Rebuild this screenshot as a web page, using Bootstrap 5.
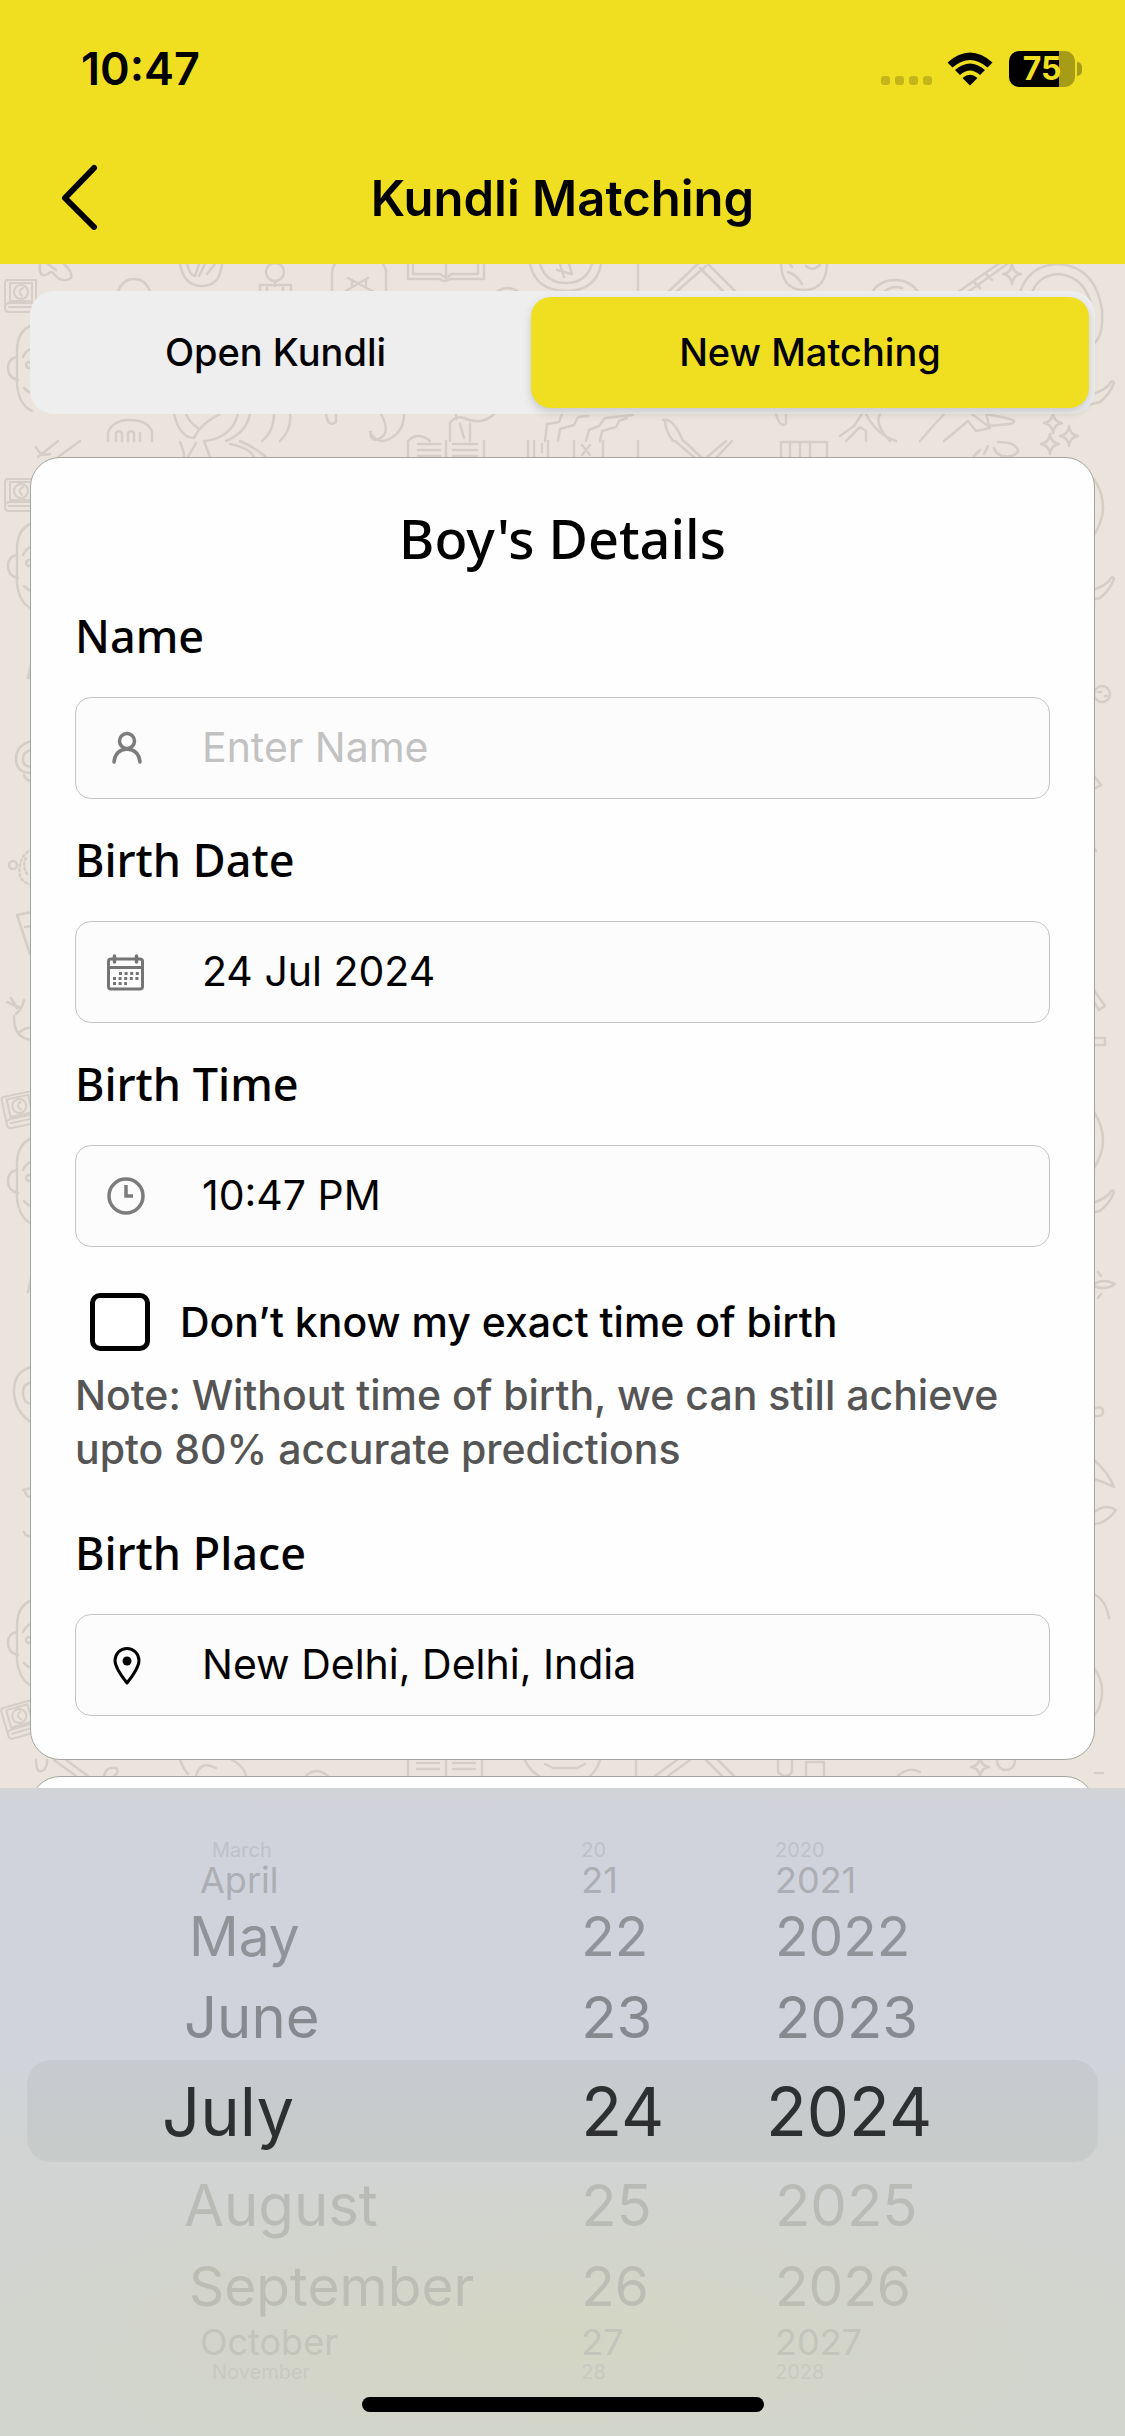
<!DOCTYPE html>
<html lang="en">
<head>
<meta charset="utf-8">
<meta name="viewport" content="width=device-width, initial-scale=1">
<title>Kundli Matching</title>
<link href="https://cdn.jsdelivr.net/npm/bootstrap@5.3.0/dist/css/bootstrap.min.css" rel="stylesheet">
<style>
  :root { --brand: #f0df20; }
  body { font-family: Inter, "Liberation Sans", sans-serif; color: #000; background: #eae4dc; }
  .app-head { background: var(--brand); height: 264px; }
  .status-bar { height: 138px; padding: 0 43px 0 81px; }
  .clock-text { font-size: 45px; font-weight: 600; line-height: 52px; }
  .signal-dots { gap: 5px; padding-top: 22px; margin-right: 15px; }
  .signal-dots span { width: 9px; height: 9px; border-radius: 3px; background: #c4b61a; }
  .battery-body { width: 66px; height: 36px; border-radius: 10px; color: var(--brand); font-size: 32px; font-weight: 700; line-height: 36px; background: linear-gradient(90deg, #000 76%, #a79c16 76%); }
  .battery-tip { width: 5px; height: 14px; border-radius: 0 7px 7px 0; background: #a79c16; margin-left: 2px; }
  .title-bar { height: 120px; padding: 0 60px; }
  .title-bar h1 { font-size: 49px; font-weight: 600; line-height: 66px; }
  .side-slot { width: 40px; height: 68px; }

  .doodles { position: absolute; inset: 0; width: 100%; height: 100%; z-index: 0; }
  .content-area { min-height: 0; padding: 27px 30px 0; }
  .content-area > :not(.doodles) { position: relative; z-index: 1; }
  .tab-track { background: #eeeeee; border-radius: 24px; height: 123px; padding: 6px; gap: 16px; margin-bottom: 43px; }
  .tab-track .btn { flex: 1 1 0; border: 0; border-radius: 20px; font-size: 38px; font-weight: 500; color: #000; }
  .tab-track .btn.active { flex: 0 0 53%; background: var(--brand); color: #000; box-shadow: 0 4px 10px rgba(0, 0, 0, .16); }

  .sheet-card { background: #fefefe; border: 1px solid #a4a4a0; border-radius: 30px; padding: 43px 44px; }
  .sheet-card h2 { font-family: "Noto Sans", sans-serif; font-size: 54px; font-weight: 500; line-height: 74px; margin-bottom: 31px; }
  .group-label { font-family: "Noto Sans", sans-serif; font-size: 45px; font-weight: 500; line-height: 60px; margin-bottom: 31px; display: block; }
  .form-block { margin-bottom: 31px; }
  .entry { height: 102px; border: 1px solid #c4c4c4; border-radius: 16px; background: #fcfcfc; padding: 0 30px; gap: 56px; }
  .entry svg { width: 40px; height: 40px; flex: none; }
  .entry input { font-size: 41px; border: 0; background: transparent; color: #000; padding: 0; outline: 0; min-width: 0; }
  .entry input::placeholder { color: #c2c2c2; opacity: 1; }
  .tick-row { padding: 15px 15px 0; gap: 30px; }
  .tick-row .form-check-input[type=checkbox] { width: 60px; height: 58px; margin: 0; border: 5px solid #000; border-radius: 10px; background-color: #fff; }
  .tick-row label { font-size: 41px; font-weight: 500; line-height: 58px; }
  .note-text { font-size: 41px; font-weight: 500; line-height: 54px; color: #555; margin: 17px 0 47px; }

  .picker-sheet { position: relative; padding: 50px 27px 24px; background: radial-gradient(ellipse 55% 24% at 50% 84%, rgba(213, 214, 190, .65), rgba(213, 214, 190, 0)), linear-gradient(#d1d3d7 0, #d0d3dc 8%, #d1d3dc 38%, #d1d4d3 54%, #d2d5cd 100%); }
  .band-back { position: absolute; left: 27px; right: 27px; top: 272px; height: 102px; border-radius: 24px; background: rgba(20, 30, 40, .05); }
  .picker-wheel { position: relative; display: flex; }
  .picker-wheel ul { margin: 0; padding: 0; list-style: none; }
  .picker-wheel li { display: flex; align-items: center; white-space: nowrap; line-height: 1; }
  .picker-wheel .month-col { width: 51%; padding-left: 135px; }
  .picker-wheel .day-col { width: 18%; padding-left: 8px; }
  .year-col { width: 31%; }
  .far-3 { height: 24px; font-size: 20px; color: #bfc1c7; padding-left: 50px; }
  .far-2 { height: 36px; font-size: 36px; color: #acaeb3; padding-left: 38px; }
  .far-1 { height: 76px; font-size: 55px; color: #909398; padding-left: 27px; }
  .near { height: 86px; font-size: 58px; color: #86898e; padding-left: 22px; }
  .chosen { height: 102px; font-size: 67px; color: #2d2f30; }
  .day-col li { padding-left: 0; }
  .year-col li:not(.chosen) { padding-left: 9px; }
  .below.near { color: #b9bbb7; }
  .below.far-1 { color: #bcbeb4; }
  .below.far-2 { color: #c3c5ba; }
  .below.far-3 { color: #c8cac0; }
  .home-bar { width: 402px; height: 15px; border-radius: 8px; background: #000; margin: 13px auto 0; }
</style>
</head>
<body>
<div class="vh-100 d-flex flex-column overflow-hidden">

  <header class="app-head flex-shrink-0">
    <div class="status-bar d-flex align-items-center justify-content-between">
      <span class="clock-text">10:47</span>
      <div class="d-flex align-items-center">
        <div class="signal-dots d-flex"><span></span><span></span><span></span><span></span></div>
        <svg width="46" height="34" viewBox="0 0 46 34" class="me-3" aria-hidden="true">
          <path d="M0.500 10.500 Q23 -9.500 45.500 10.500 L40.500 15.500 Q23 0.500 5.500 15.500Z"/>
          <path d="M8 18 Q23 5 38 18 L33 23 Q23 14 13 23Z"/>
          <path d="M15.500 26 Q23 19.500 30.500 26 L23 33.500Z"/>
        </svg>
        <div class="battery-body text-center">75</div>
        <div class="battery-tip"></div>
      </div>
    </div>
    <div class="title-bar d-flex align-items-start justify-content-between">
      <a href="#" class="side-slot mt-4" aria-label="Back">
        <svg width="40" height="68" viewBox="0 0 40 68"><path d="M34 6 5 36 34 65" fill="none" stroke="#000" stroke-width="6" stroke-linecap="round" stroke-linejoin="round"/></svg>
      </a>
      <h1 class="mb-0 mt-4 pt-1">Kundli Matching</h1>
      <span class="side-slot"></span>
    </div>
  </header>

  <main class="content-area flex-grow-1 position-relative overflow-hidden">
    <svg class="doodles" viewBox="0 0 1125 1524" preserveAspectRatio="xMidYMin slice" fill="none" stroke="#d5cec6" stroke-width="2.500" stroke-linecap="round" stroke-linejoin="round" aria-hidden="true">
      <defs>
        <g id="charm-book" stroke-width="2"><path d="M6 2h30v32H9q-4 0-4-4V5q0-3 3-3M5 28q1-3 5-3h26M10 5h22v18H10zM9 29h24"/><circle cx="21" cy="14" r="7"/><path d="M23 10q-6 3-1 8"/></g>
        <g id="child-face"><path d="M32 0Q17 6 17 26v34q2 20 15 26M17 32q-9 1-9 11t10 12M23 32q4-8 9-8M32 68q-5-1-8-5"/><circle cx="29" cy="40" r="3"/></g>
        <g id="twinkle"><path d="M0-10Q1-1 9 0 1 1 0 10-1 1-9 0-1-1 0-10Z"/></g>
        <g id="horn"><path d="M0 0h10M0 12h9M-10 27 18 20Q28 12 32 1 30-3 27 3 18 12 0 14"/></g>
      </defs>
      <!-- strip above the tabs -->
      <path d="M40 0q-2 15 8 10 4-4 6 0 8 10 17 4 2-6-7-14M48 0l8 6"/>
      <path d="M180 0q4 22 22 22T222 0M187 0q3 12 8 12l4-12M199 12l6-12M207 10l8-10"/>
      <circle cx="275" cy="8" r="9"/><path d="M275-6v5M275 17v5M260 28v-7h31v7M267 28v-4M283 28v-4M118 28q4-13 16-13t16 13"/>
      <path d="M332 28V8q2-12 12-14M386 28V6q-3-8-8-10M344 28l24-14M348 14l26 14M352 16v6M366 16v6"/>
      <path d="M408 0v15h32q4 4 10 0h34V0M413 0v10h27l6 4 6-4h26V0M446 0v12"/>
      <path d="M530 0q6 27 36 27t35-27M540 0q6 19 26 19T592 0M557 6l14 4M560 0l4 13M569 0l3 10M497 28q10-8 22 0"/>
      <path d="M638-4v32M668 28l34-32M676 28l30-26M700 4l24 24M708 0l28 28"/>
      <path d="M781 0q1 26 23 26T827 0M788 8q8 2 14 12M790 0l2 3M806 2q6 6 14-1"/>
      <path d="M872 28q8-12 23-12t23 12M884 28q8-7 18-4M958 28l46-32M968 28l42-30M974 18l6 6M986 10l6 6"/>
      <use href="#twinkle" x="1012" y="10"/>
      <path d="M1020 28Q1030 0 1060 0q36 4 42 46 2 30-12 36M1032 28q8-18 28-18 26 4 32 34"/>
      <!-- strip between tabs and card -->
      <path d="M108 177v-8q4-13 22-13t22 12v9M116 177v-8q3-4 6 0v8M128 177v-8q3-4 6 0v8M140 177v-8"/>
      <path d="M174 150q6 24 20 24 6-14 26-24M186 150q3 8 12 14M206 177q26-4 32-27M226 177q20-8 24-27M262 177q12-10 12-27M280 177q12-12 10-27"/>
      <path d="M326 150q2 14 10 8v-8M381 150q12 22-6 26-6-2-4-8M370 168q4 9 14 9 20-6 20-27M408 177q10-10 22 0"/>
      <path d="M450 177v-18q6-8 14-5 18 8 30-4M456 150v5M470 160v17M460 160l4 14"/>
      <path d="M545 177l2-17 12-2 3-8M558 177l2-12 14-4 4-8 10-1M586 177l3-11 10-4 6-8 28-3M600 177l2-10 14-4 3-6 8-3"/>
      <path d="M663 156q10-3 20 21M665 156q0 10 8 21M776 150q4 14 10 10v-10M840 172l14-10 8-12M846 177l14-14 6 4v10M866 150q10 20 30 27M880 150q-6 10 10 27"/>
      <path d="M920 177q12-14 24-27M944 177l24-20 8 10 14-3-4-14M972 150l16 12 22-2q10-3-4-6l-20-4"/>
      <use href="#twinkle" x="1053" y="159"/><use href="#twinkle" x="1069" y="172"/><use href="#twinkle" x="1050" y="180"/>
      <path d="M38 193l20-16M36 183q4 10 14 7M58 193l22-16M180 178q4 9 4 15M196 179l-8 14M204 177l6 16M230 180q20 4 24 13M240 177q14 6 26 16"/>
      <path d="M408 177v17M484 177v17M446 177v17M418 180h22M418 186h22M418 192h22M453 180h24M453 186h24M453 192h24"/>
      <path d="M528 177v17M534 177v17M548 177v17M542 180v8M574 177v17M582 181l8 10M590 181l-8 10M603 177v17M638 177v17M675 177l20 17M684 177l18 17M706 194l20-17M716 194l16-17M781 194v-16h46v16M790 180v14M800 180v14M810 180v14"/>
      <path d="M974 192l6-6M984 190l4-8M998 178q20 0 20 10-6 6-14 4M994 184q2 6 8 8"/>
      <!-- left edge -->
      <use href="#charm-book" y="14"/><use href="#child-face" y="61"/>
      <use href="#charm-book" y="213"/><use href="#child-face" y="259"/>
      <path d="M28 414l4-18M28 414h4"/>
      <path d="M32 477q-16 4-16 18t16 14M32 486q-9 1-9 9t9 8M24 511q2 6 8 6"/>
      <circle cx="13" cy="601" r="4"/><path d="M32 585q-15 8-12 28 4 6 12 8M26 594q-4 8 1 16" stroke-dasharray="2 3"/>
      <path d="M32 648l-15 3 13 39M32 662l-7 1M7 738l14 6M11 734l6 10M14 752q-1 22 18 24M16 750q6-5 8-14M20 768q6-5 12-4"/>
      <g transform="rotate(-12 20 850)"><use href="#charm-book" y="828"/></g><use href="#child-face" y="874"/>
      <path d="M28 1028l4-18M32 1103q-18 4-18 24t18 32M32 1118q-10 2-9 12t9 10M23 1226l9-2M25 1228q1 5 7 5M24 1268q2 5 8 4"/>
      <use href="#child-face" y="1336"/><g transform="rotate(-16 20 1458)"><use href="#charm-book" y="1438"/></g>
      <!-- right edge -->
      <use href="#horn" x="1082" y="118"/><path d="M1094 215q9 14 9 28t-9 28"/><use href="#horn" x="1082" y="314"/>
      <circle cx="1102" cy="430" r="8"/><path d="M1098 428h3M1105 432h2M1094 512l7 9-7 4M1094 584l2 3M1094 726l11 16-6 4-5-8M1094 774h11v7h-11M1094 848q9 14 9 28t-9 28"/>
      <use href="#horn" x="1082" y="927"/><path d="M1094 1020q10-6 21 0-10 7-21 2M1098 1008l3 4M1098 1034l3-4M1094 1145q8-4 9 2t-9 5M1094 1196q14 12 20 27-10-5-20-8M1094 1248q12-9 22-2-10 14-22 14M1094 1330q12 6 15 24M1094 1404q9 12 8 26-1 14-8 22"/>
      <!-- strip under the card -->
      <path d="M36 1496q0 15 8 10 4-5 3-10M54 1496l22 16M66 1496l22 16M104 1512q2-10 12-8 4 4-2 8M180 1496q4 10 8 14M196 1512q4-16 20-8M232 1496q12 6 14 16M306 1512q10-10 22 0M408 1496v16M446 1496v16M482 1496v16M417 1499h22M417 1505h22M453 1499h22M453 1505h22M525 1496q4 10 14 16M600 1496q-3 10-10 16M545 1500l8 4h24l8-4M636 1496v16M655 1512l22-16M668 1512l22-16M706 1496l16 16M718 1496l16 16M778 1496v12q8 8 14 0v-12M806 1512v-14h18v14M898 1512q10-10 22-4M1095 1509h8"/>
      <circle cx="1006" cy="1497" r="9"/><use href="#twinkle" x="980" y="1503"/>
    </svg>

    <div class="tab-track d-flex" role="tablist">
      <button type="button" class="btn" role="tab" aria-selected="false">Open Kundli</button>
      <button type="button" class="btn active" role="tab" aria-selected="true">New Matching</button>
    </div>

    <form class="sheet-card">
      <h2 class="text-center">Boy's Details</h2>

      <div class="form-block">
        <label class="group-label" for="person-name">Name</label>
        <div class="entry d-flex align-items-center">
          <svg viewBox="0 0 40 40" fill="none" stroke="#7c7c7c" stroke-width="3.500" stroke-linecap="round" aria-hidden="true"><circle cx="21" cy="13" r="7.500"/><path d="M8 34q1-12 13-13 12 1 13 13"/></svg>
          <input id="person-name" class="flex-grow-1" type="text" placeholder="Enter Name">
        </div>
      </div>

      <div class="form-block">
        <label class="group-label" for="birth-date">Birth Date</label>
        <div class="entry d-flex align-items-center">
          <svg viewBox="0 0 40 40" fill="none" stroke="#757575" stroke-width="3" aria-hidden="true"><rect x="2.500" y="7" width="34" height="30" rx="2.500"/><path d="M3 15.500h33"/><path d="M8.500 4v6M30.500 4v6" stroke-linecap="round" stroke-width="3.500"/><path d="M13 21.500h20M7 26.500h26M7 31.500h14" stroke-width="3" stroke-dasharray="3 2.600"/></svg>
          <input id="birth-date" class="flex-grow-1" type="text" value="24 Jul 2024">
        </div>
      </div>

      <div class="form-block">
        <label class="group-label" for="birth-time">Birth Time</label>
        <div class="entry d-flex align-items-center">
          <svg viewBox="0 0 40 40" fill="none" stroke="#7c7c7c" stroke-width="3.500" aria-hidden="true"><circle cx="20" cy="20" r="17"/><path d="M20 9v11h7"/></svg>
          <input id="birth-time" class="flex-grow-1" type="text" value="10:47 PM">
        </div>
      </div>

      <div class="tick-row d-flex align-items-center">
        <input class="form-check-input flex-shrink-0" type="checkbox" id="unknown-time">
        <label for="unknown-time">Don’t know my exact time of birth</label>
      </div>
      <p class="note-text">Note: Without time of birth, we can still achieve<br>upto 80% accurate predictions</p>

      <div>
        <label class="group-label" for="birth-place">Birth Place</label>
        <div class="entry d-flex align-items-center">
          <svg viewBox="0 0 40 40" fill="none" stroke="#000" stroke-width="3" stroke-linejoin="round" aria-hidden="true"><path d="M21 38Q9 23 9 15.500a12 12 0 0 1 24 0Q33 23 21 38Z"/><circle cx="21" cy="16" r="4.500" fill="#000" stroke="none"/></svg>
          <input id="birth-place" class="flex-grow-1" type="text" value="New Delhi, Delhi, India">
        </div>
      </div>
    </form>

    <section class="sheet-card mt-3" aria-label="Second person"></section>
  </main>

  <section class="picker-sheet flex-shrink-0" aria-label="Date picker">
    <div class="band-back"></div>
    <div class="picker-wheel">
      <ul class="month-col">
        <li class="far-3">March</li><li class="far-2">April</li><li class="far-1">May</li><li class="near">June</li>
        <li class="chosen">July</li>
        <li class="below near">August</li><li class="below far-1">September</li><li class="below far-2">October</li><li class="below far-3">November</li>
      </ul>
      <ul class="day-col">
        <li class="far-3">20</li><li class="far-2">21</li><li class="far-1">22</li><li class="near">23</li>
        <li class="chosen">24</li>
        <li class="below near">25</li><li class="below far-1">26</li><li class="below far-2">27</li><li class="below far-3">28</li>
      </ul>
      <ul class="year-col">
        <li class="far-3">2020</li><li class="far-2">2021</li><li class="far-1">2022</li><li class="near">2023</li>
        <li class="chosen">2024</li>
        <li class="below near">2025</li><li class="below far-1">2026</li><li class="below far-2">2027</li><li class="below far-3">2028</li>
      </ul>
    </div>
    <div class="home-bar"></div>
  </section>
</div>
<script src="https://cdn.jsdelivr.net/npm/bootstrap@5.3.0/dist/js/bootstrap.bundle.min.js"></script>
</body>
</html>
